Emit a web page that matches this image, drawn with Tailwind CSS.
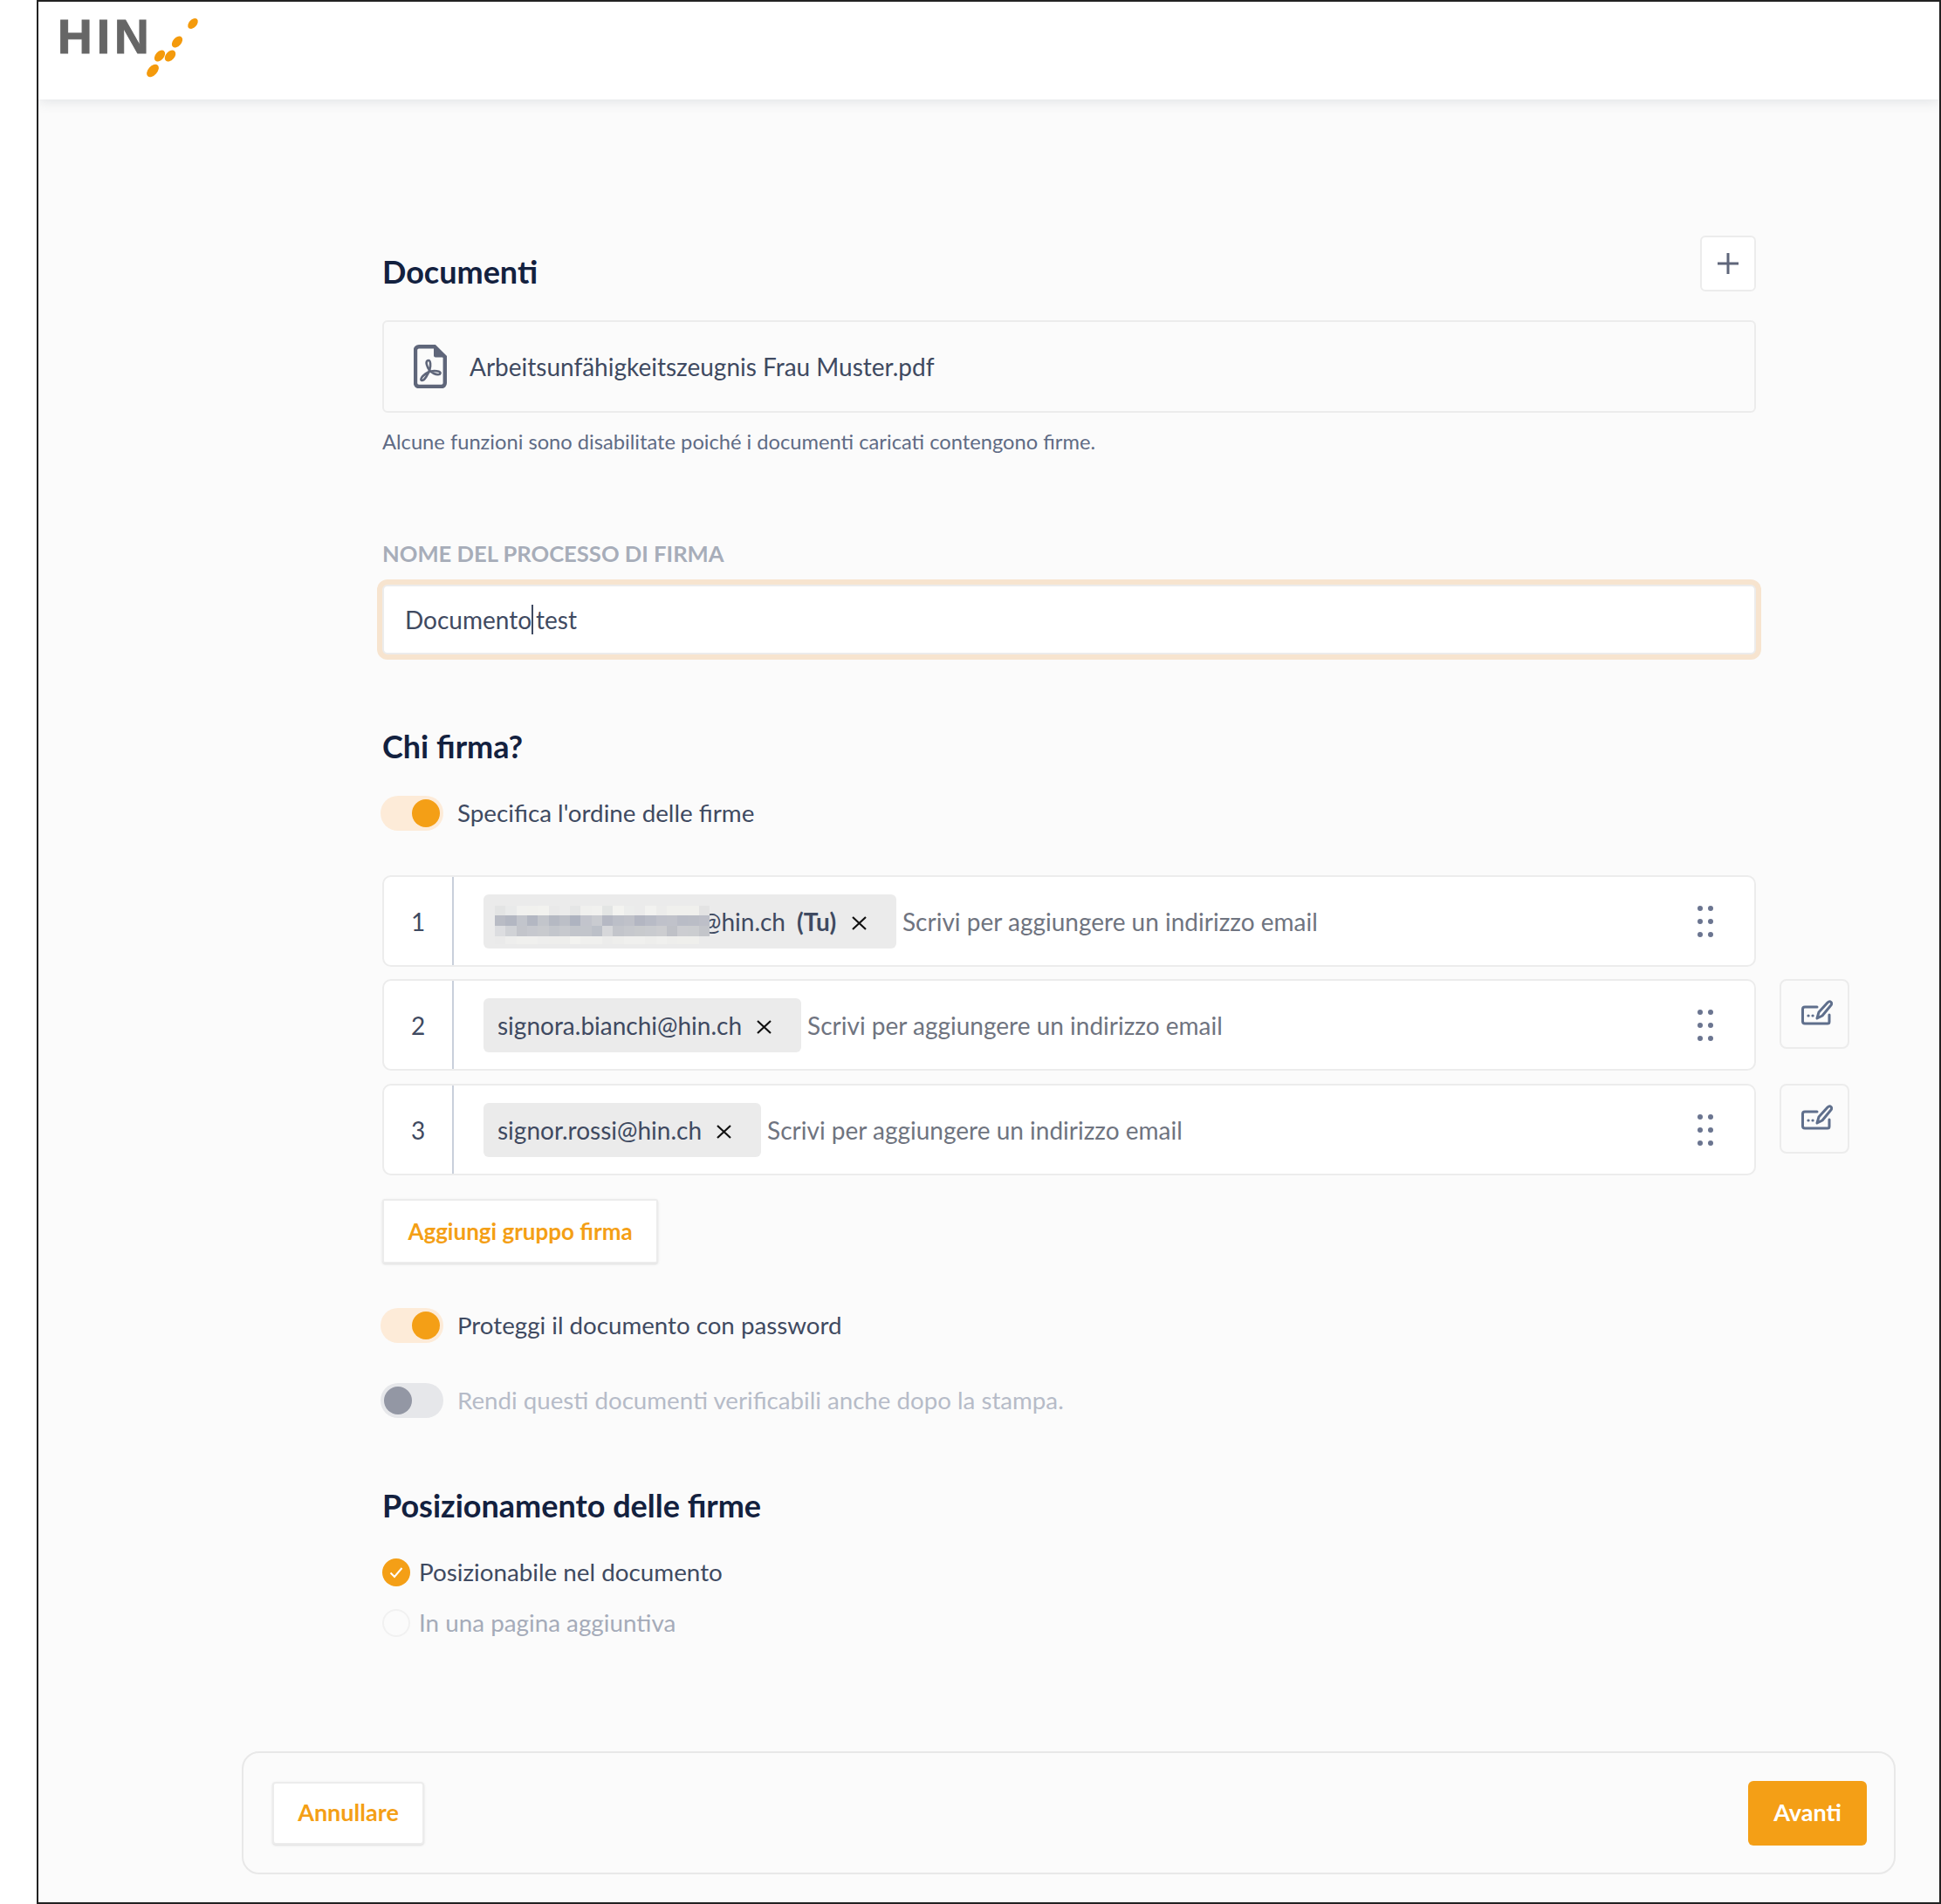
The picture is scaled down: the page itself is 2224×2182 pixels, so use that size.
<!DOCTYPE html>
<html lang="it">
<head>
  <meta charset="UTF-8" />
  <title>HIN Sign</title>
  <script src="https://cdn.jsdelivr.net/npm/@tailwindcss/browser@4"></script>
</head>
<body class="bg-white font-['Lato',sans-serif] text-[28px] text-[#3f4a61]">
<div class="ml-[42px] h-[2182px] border-2 border-[#222] bg-[#fbfbfb] flex flex-col overflow-hidden">

  <!-- header -->
  <header class="h-[112px] shrink-0 bg-white shadow-[0_2px_14px_rgba(60,70,90,0.14)] relative flex">
    <span class="ml-[22px] mt-[10px] w-[102px] h-[60px] leading-[60px] font-['Liberation_Sans',sans-serif] font-bold text-[55px] text-[#666] tracking-[5px] [-webkit-text-stroke:1px_#666]">HIN</span>
    <svg class="mt-[16px]" width="70" height="72" viewBox="0 0 70 72" fill="#f49a0c">
      <ellipse cx="53" cy="9" rx="7" ry="4.5" transform="rotate(-48 53 9)"/>
      <ellipse cx="35" cy="30" rx="7.5" ry="4.8" transform="rotate(-48 35 30)"/>
      <ellipse cx="15" cy="46" rx="7.5" ry="4.8" transform="rotate(-48 15 46)"/>
      <ellipse cx="27" cy="46" rx="7.5" ry="5" transform="rotate(-48 27 46)"/>
      <ellipse cx="7" cy="63" rx="8.500" ry="5.200" transform="rotate(-48 7 63)"/>
    </svg>
  </header>

  <div class="ml-[394px] w-[1574px] shrink-0">

    <!-- documenti -->
    <div class="mt-[156px] flex justify-between items-start">
      <h2 class="mt-[20px] text-[36px] leading-[42px] font-bold text-[#13213f]">Documenti</h2>
      <button class="w-[64px] h-[64px] rounded-[6px] border-2 border-[#ececec] bg-white flex items-center justify-center">
        <svg width="26" height="26" viewBox="0 0 26 26" fill="none" stroke="#5f667a" stroke-width="3"><path d="M1 13h24M13 1v24"/></svg>
      </button>
    </div>
    <div class="mt-[33px] h-[106px] rounded-[6px] border-2 border-[#ececec] flex items-center pl-[34px]">
      <svg width="38" height="50" viewBox="0 0 38 50" fill="none">
        <path d="M6 2.200h18l11.800 11.800v30a4 4 0 0 1-4 4H6a4 4 0 0 1-4-4V6.200a4 4 0 0 1 4-4z" stroke="#5f667a" stroke-width="4.400"/>
        <path d="M23 2v10.500a2 2 0 0 0 2 2h11z" fill="#5f667a"/>
        <path d="M17 18c-2 0-3 2-2 5 1 4 4 8 8 10 3 1.500 7 2 7.500 0 .5-2-3-3-7-3-5 0-10 3-13 6-2 2-3 5-1 5 3 0 7-7 9-13 1-4 1-10-1.500-10z" stroke="#5f667a" stroke-width="2.600"/>
      </svg>
      <span class="ml-[26px]">Arbeitsunfähigkeitszeugnis Frau Muster.pdf</span>
    </div>
    <p class="mt-[17px] h-[32px] leading-[32px] text-[23.7px] text-[#5f6b85]">Alcune funzioni sono disabilitate poiché i documenti caricati contengono firme.</p>

    <!-- nome -->
    <label class="block mt-[96px] h-[32px] leading-[32px] text-[25.6px] font-bold text-[#a7adb9]">NOME DEL PROCESSO DI FIRMA</label>
    <div class="mt-[20px] h-[80px] rounded-[6px] border-2 border-[#ececec] bg-white ring-[6px] ring-[#f7e4cf] flex items-center pl-[24px]">
      <span>Documento</span><span class="w-[2px] h-[34px] bg-[#3f4a61] -mr-[2px]"></span><span class="ml-[5px]">test</span>
    </div>

    <!-- chi firma -->
    <h2 class="mt-[84px] text-[36px] leading-[42px] font-bold text-[#13213f]">Chi firma?</h2>
    <div class="mt-[36px] flex items-center h-[40px]">
      <span class="w-[72px] h-[40px] -ml-[2px] rounded-full bg-[#fdebd8] flex items-center justify-end pr-[4px]"><span class="w-[32px] h-[32px] rounded-full bg-[#f49f16]"></span></span>
      <span class="ml-[16px] text-[27.8px]">Specifica l'ordine delle firme</span>
    </div>

    <!-- riga 1 -->
    <div class="mt-[51px] flex">
      <div class="w-[1574px] h-[105px] shrink-0 rounded-[10px] border-2 border-[#ececec] bg-white flex items-center">
        <span class="w-[80px] h-full flex items-center justify-center border-r-2 border-[#c9cfdb]">1</span>
        <div class="relative ml-[34px] h-[62px] w-[473px] rounded-[6px] bg-[#ebebeb] flex items-center overflow-hidden">
          <span class="ml-[249px]">@hin.ch</span>
          <span class="ml-[13px] font-bold">(Tu)</span>
          <svg class="ml-[18px] mt-[5px]" width="17" height="16" viewBox="0 0 17 16" stroke="#111" stroke-width="2.200"><path d="M1 1l15 14M16 1L1 15"/></svg>
          <svg id="pixels" class="absolute left-[13px] top-[13px]" width="246" height="44" viewBox="0 0 246 44" shape-rendering="crispEdges"></svg>
        </div>
        <span class="ml-[7px] text-[#6f7480]">Scrivi per aggiungere un indirizzo email</span>
        <svg class="ml-auto mr-[47px]" width="18" height="36" viewBox="0 0 18 36" fill="#6b7590"><circle cx="3" cy="3" r="3"/><circle cx="15" cy="3" r="3"/><circle cx="3" cy="18" r="3"/><circle cx="15" cy="18" r="3"/><circle cx="3" cy="33" r="3"/><circle cx="15" cy="33" r="3"/></svg>
      </div>
    </div>

    <!-- riga 2 -->
    <div class="mt-[14px] flex items-start">
      <div class="w-[1574px] h-[105px] shrink-0 rounded-[10px] border-2 border-[#ececec] bg-white flex items-center">
        <span class="w-[80px] h-full flex items-center justify-center border-r-2 border-[#c9cfdb]">2</span>
        <div class="ml-[34px] h-[62px] rounded-[6px] bg-[#ebebeb] flex items-center pl-[16px] pr-[34px]">
          <span>signora.bianchi@hin.ch</span>
          <svg class="ml-[17px] mt-[5px]" width="17" height="16" viewBox="0 0 17 16" stroke="#111" stroke-width="2.200"><path d="M1 1l15 14M16 1L1 15"/></svg>
        </div>
        <span class="ml-[7px] text-[#6f7480]">Scrivi per aggiungere un indirizzo email</span>
        <svg class="ml-auto mr-[47px]" width="18" height="36" viewBox="0 0 18 36" fill="#6b7590"><circle cx="3" cy="3" r="3"/><circle cx="15" cy="3" r="3"/><circle cx="3" cy="18" r="3"/><circle cx="15" cy="18" r="3"/><circle cx="3" cy="33" r="3"/><circle cx="15" cy="33" r="3"/></svg>
      </div>
      <button class="ml-[27px] w-[80px] h-[80px] shrink-0 rounded-[8px] border-2 border-[#ececec] flex items-center justify-center pl-[6px] pb-[2px]">
        <svg width="36" height="30" viewBox="0 0 36 30" fill="none" stroke="#5f6f8c" stroke-width="3" stroke-linecap="round" stroke-linejoin="round">
          <path d="M18 8H4a2.500 2.500 0 0 0-2.500 2.500v14A2.500 2.500 0 0 0 4 27h26a2 2 0 0 0 2-2v-8"/>
          <path d="M18 21l2-7L30 3c1.500-1.500 3-1.500 4 -.5 1 1 1 2.500-.5 4L24 18z"/>
          <path d="M8 18h.1M13 18h.1" stroke-width="3.200"/>
        </svg>
      </button>
    </div>

    <!-- riga 3 -->
    <div class="mt-[15px] flex items-start">
      <div class="w-[1574px] h-[105px] shrink-0 rounded-[10px] border-2 border-[#ececec] bg-white flex items-center">
        <span class="w-[80px] h-full flex items-center justify-center border-r-2 border-[#c9cfdb]">3</span>
        <div class="ml-[34px] h-[62px] rounded-[6px] bg-[#ebebeb] flex items-center pl-[16px] pr-[34px]">
          <span>signor.rossi@hin.ch</span>
          <svg class="ml-[17px] mt-[5px]" width="17" height="16" viewBox="0 0 17 16" stroke="#111" stroke-width="2.200"><path d="M1 1l15 14M16 1L1 15"/></svg>
        </div>
        <span class="ml-[7px] text-[#6f7480]">Scrivi per aggiungere un indirizzo email</span>
        <svg class="ml-auto mr-[47px]" width="18" height="36" viewBox="0 0 18 36" fill="#6b7590"><circle cx="3" cy="3" r="3"/><circle cx="15" cy="3" r="3"/><circle cx="3" cy="18" r="3"/><circle cx="15" cy="18" r="3"/><circle cx="3" cy="33" r="3"/><circle cx="15" cy="33" r="3"/></svg>
      </div>
      <button class="ml-[27px] w-[80px] h-[80px] shrink-0 rounded-[8px] border-2 border-[#ececec] flex items-center justify-center pl-[6px] pb-[2px]">
        <svg width="36" height="30" viewBox="0 0 36 30" fill="none" stroke="#5f6f8c" stroke-width="3" stroke-linecap="round" stroke-linejoin="round">
          <path d="M18 8H4a2.500 2.500 0 0 0-2.500 2.500v14A2.500 2.500 0 0 0 4 27h26a2 2 0 0 0 2-2v-8"/>
          <path d="M18 21l2-7L30 3c1.500-1.500 3-1.500 4 -.5 1 1 1 2.500-.5 4L24 18z"/>
          <path d="M8 18h.1M13 18h.1" stroke-width="3.200"/>
        </svg>
      </button>
    </div>

    <button class="mt-[27px] w-[316px] h-[74px] rounded-[3px] border-2 border-[#ececec] bg-white shadow-sm text-[26px] font-bold text-[#f49f16]">Aggiungi gruppo firma</button>

    <div class="mt-[51px] flex items-center h-[40px]">
      <span class="w-[72px] h-[40px] -ml-[2px] rounded-full bg-[#fdebd8] flex items-center justify-end pr-[4px]"><span class="w-[32px] h-[32px] rounded-full bg-[#f49f16]"></span></span>
      <span class="ml-[16px] text-[27.7px]">Proteggi il documento con password</span>
    </div>
    <div class="mt-[46px] flex items-center h-[40px]">
      <span class="w-[72px] h-[40px] -ml-[2px] rounded-full bg-[#e6e7ea] flex items-center pl-[4px]"><span class="w-[32px] h-[32px] rounded-full bg-[#9397a4]"></span></span>
      <span class="ml-[16px] text-[27.7px] text-[#b6bbc8]">Rendi questi documenti verificabili anche dopo la stampa.</span>
    </div>

    <!-- posizionamento -->
    <h2 class="mt-[79px] text-[36px] leading-[42px] font-bold text-[#13213f]">Posizionamento delle firme</h2>
    <div class="mt-[40px] flex items-center h-[32px]">
      <span class="w-[32px] h-[32px] rounded-full bg-[#f49f16] flex items-center justify-center">
        <svg width="16" height="14" viewBox="0 0 16 14" fill="none" stroke="#fff" stroke-width="2"><path d="M1.500 7.500l4.500 4.500 8.500-10"/></svg>
      </span>
      <span class="ml-[10px] text-[27.8px]">Posizionabile nel documento</span>
    </div>
    <div class="mt-[26px] flex items-center h-[32px]">
      <span class="w-[32px] h-[32px] rounded-full border-2 border-[#f1f1f1]"></span>
      <span class="ml-[10px] text-[27.8px] text-[#a5abb9]">In una pagina aggiuntiva</span>
    </div>
  </div>

  <!-- footer -->
  <div class="ml-[233px] mt-[131px] w-[1895px] h-[141px] shrink-0 rounded-[20px] border-2 border-[#e8e8e8] flex items-center justify-between pl-[33px] pr-[31px]">
    <button class="w-[174px] h-[72px] rounded-[4px] border-2 border-[#ececec] bg-white shadow-sm text-[27px] font-bold text-[#f49f16]">Annullare</button>
    <button class="w-[136px] h-[74px] rounded-[6px] bg-[#f49f16] text-[27px] font-bold text-white">Avanti</button>
  </div>
</div>

<script>
  // redacted email, drawn as mosaic cells
  const righe = [
    ["e3e4e4","e9eaea","f1f1ef","f1f1ee","f2f2ef","e9e9e9","ebebeb","e5e6e6","f0f0ee","f1f1ef","e3e5e4","f3f3f0","ecedec","ebebeb","f2f2f0","ececeb","f0f0ed","f0f0ed","f0f0ed","e3e3e3"],
    ["b9bcc5","b3b7c2","c2c5cc","b3b7c2","c2c5cb","b5b9c3","bcbfc7","aeb3c0","c2c4cc","c9cbd0","b5b8c3","bcbfc8","bfc1c9","b3b6c2","b8bbc6","bfc1ca","c0c2ca","b9bcc6","babdc6","bdbfc8"],
    ["dcdde0","d0d2d6","c3c5cb","c6c8ce","c8cace","c3c6cc","c7c9ce","c2c5cb","c2c5cb","bcc0c8","d6d7da","c3c5cb","c6c8cd","c8cacd","c9cbcf","cccdd0","bfc1c7","cccdd1","cbcdd0","c3c5ca"],
    ["eaeaea","eeeeed","f0f0ee","f0f0ee","eeeeed","eeeeec","eeeeec","f3f3f0","f0f0ee","f0f0ee","ececeb","eeeeec","f0f0ee","f0f0ee","eeeeec","f0f0ee","eeeeec","efefec","efefec","ebebeb"]
  ];
  const ys = [0, 11, 23, 35];
  const hs = [11, 12, 12, 9];
  let rects = "";
  righe.forEach((riga, r) => riga.forEach((c, i) => {
    rects += `<rect x="${i * 12.3}" y="${ys[r]}" width="12.4" height="${hs[r]}" fill="#${c}"/>`;
  }));
  document.getElementById("pixels").innerHTML = rects;
</script>
</body>
</html>
